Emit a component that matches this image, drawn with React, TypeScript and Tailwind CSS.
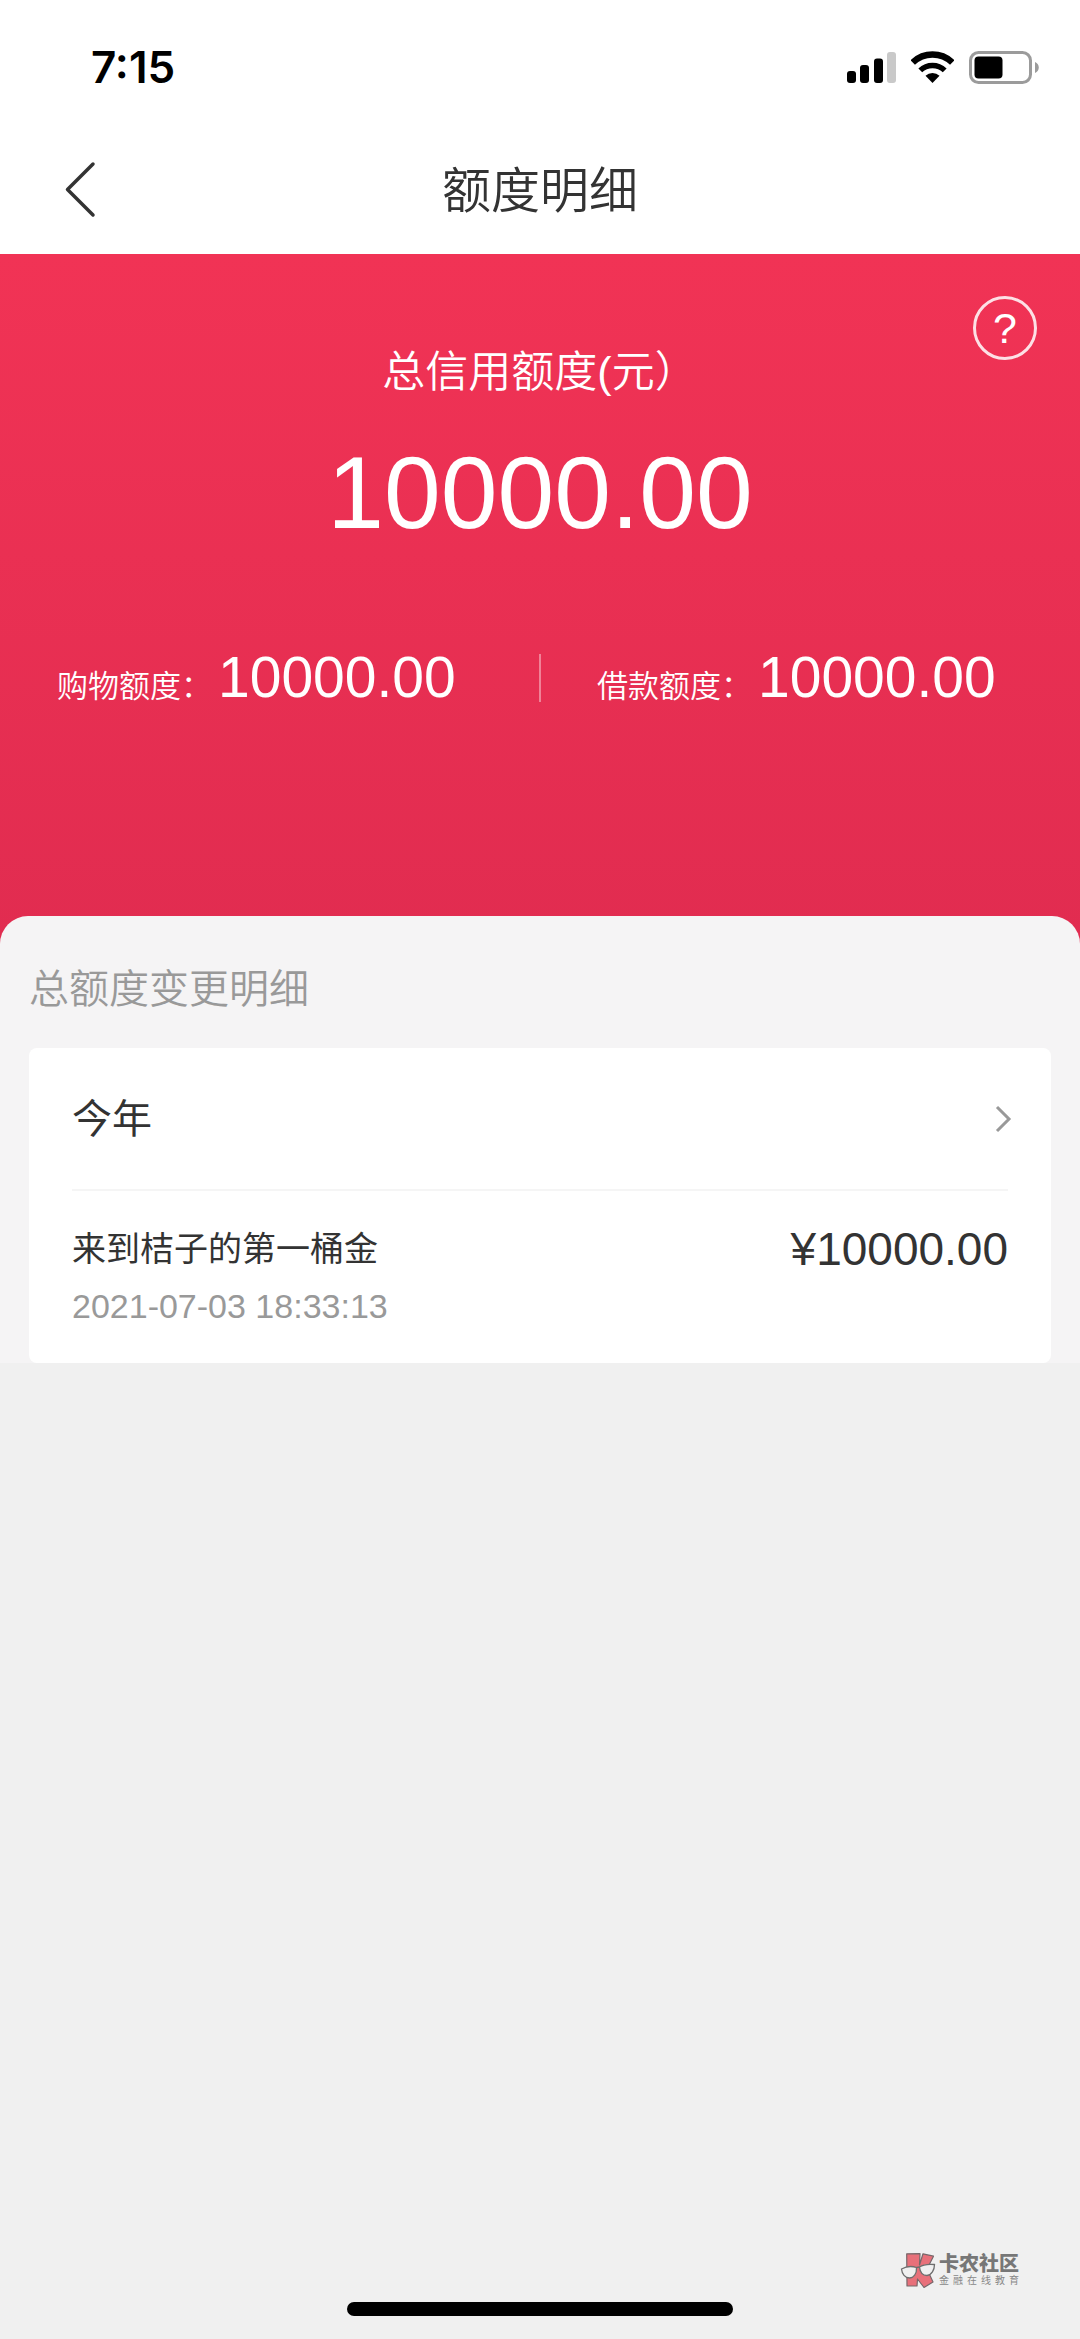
import React from "react";

const StatusIcons = () => (
  <div className="flex items-center gap-[15px]">
    <svg width="49" height="32" viewBox="0 0 49 32" aria-label="信号">
      <rect x="0" y="20" width="9" height="12" rx="3" fill="#000" />
      <rect x="13" y="14" width="9" height="18" rx="3" fill="#000" />
      <rect x="27" y="7.500" width="9" height="24.500" rx="3" fill="#000" />
      <rect x="40" y="1" width="9" height="31" rx="3" fill="#c9c9c9" />
    </svg>
    <svg width="43" height="32" viewBox="0 0 43 32" aria-label="无线网络">
      <g fill="none" stroke="#000">
        <path d="M1.700 11.500A28.500 28.500 0 0 1 41.300 11.500" strokeWidth="6.500" />
        <path d="M9.300 19.400A17.500 17.500 0 0 1 33.700 19.400" strokeWidth="5.500" />
      </g>
      <path d="M21.500 32 14.500 24.800A10 10 0 0 1 28.500 24.800Z" fill="#000" />
    </svg>
    <svg width="70" height="33" viewBox="0 0 70 33" aria-label="电池">
      <rect x="1.500" y="1.500" width="60" height="30" rx="8" fill="none" stroke="#9b9b9b" strokeWidth="3" />
      <rect x="5.500" y="5.500" width="28" height="22" rx="4" fill="#000" />
      <path d="M66 11c5 2 5 9 0 11Z" fill="#9b9b9b" />
    </svg>
  </div>
);

const Quota = ({ label, value }: { label: string; value: string }) => (
  <div className="flex flex-1 items-baseline gap-1.5 pl-[57px]">
    <dt className="text-[31px] font-[350]">{label}</dt>
    <dd className="text-[57px]">{value}</dd>
  </div>
);

const CommunityLogo = () => (
  <svg width="34" height="36" viewBox="0 0 34 36" className="overflow-visible">
    <path
      d="M5.700 0.800 19 0.600 18.500 12 22 0.800 32.500 3.200 26 16 32 29 23 34.500 16.500 26 16 33 6 33Z"
      fill="#e8707a"
      stroke="#77686b"
      strokeWidth="1.200"
      strokeLinejoin="round"
    />
    <g fill="#f0f0f0" stroke="#6e6e6e" strokeWidth="1.300">
      <path d="M0.500 16C5 13.500 11 13 15.500 14.500 16 21 12.500 25 8.500 25 4 25 1 21 0.500 16Z" />
      <path d="M18.500 14C22 11.500 28 11 33.500 11.500 33.500 17 30.500 22 26 22.500 21.500 22.500 19 19 18.500 14Z" />
      <path d="M15.500 14.500 18.500 14" />
    </g>
  </svg>
);

export default function App() {
  return (
    <div className="flex min-h-screen flex-col bg-[#f0f0f0] font-['Liberation_Sans','Noto_Sans_CJK_SC',sans-serif] text-[#333]">
      <header className="bg-white">
        <div className="flex h-32 items-center justify-between pt-1.5 pr-[41px] pl-[91px]">
          <time className="font-['Inter',sans-serif] text-[44px] font-semibold text-black">7:15</time>
          <StatusIcons />
        </div>
        <div className="grid h-[126px] grid-cols-[1fr_auto_1fr] items-center">
          <button type="button" aria-label="返回" className="w-fit pl-[65px]">
            <svg width="32" height="60" viewBox="0 0 32 60" fill="none" stroke="#333" strokeWidth="3.500" strokeLinecap="round" strokeLinejoin="round">
              <path d="M28 3 2.500 28.500 28 54" />
            </svg>
          </button>
          <h1 className="text-[49px] leading-[56px] font-[350]">额度明细</h1>
        </div>
      </header>

      <section className="relative bg-linear-to-b from-[#f13355] to-[#e12c50] pt-[86px] text-white">
        <button
          type="button"
          aria-label="帮助"
          className="absolute top-[42px] right-[43px] flex size-16 items-center justify-center rounded-full border-3 border-white/85 text-[43px] leading-none"
        >
          ?
        </button>
        <p className="text-center text-[43px] leading-[64px] font-[350]">总信用额度(元）</p>
        <p className="pt-[25px] text-center text-[102px] leading-[128px]">10000.00</p>
        <dl className="mt-[71px] flex h-[100px] items-center">
          <Quota label="购物额度：" value="10000.00" />
          <div className="-mx-px h-12 w-0.5 bg-white/40" />
          <Quota label="借款额度：" value="10000.00" />
        </dl>
        <div className="h-[217px]" />
      </section>

      <main className="relative -mt-[29px] rounded-t-[28px] bg-[#f5f4f5] px-[29px] pt-[43px]">
        <h2 className="text-[40px] leading-[60px] font-[350] text-[#999]">总额度变更明细</h2>
        <div className="mt-[29px] rounded-lg bg-white px-[43px]">
          <button type="button" className="flex h-[141px] w-full items-center justify-between text-[40px]">
            今年
            <svg width="18" height="28" viewBox="0 0 18 28" fill="none" stroke="#999" strokeWidth="3" className="-mr-1">
              <path d="M3 2 15 14 3 26" />
            </svg>
          </button>
          <hr className="border-t-2 border-[#f5f5f5]" />
          <div className="flex items-start justify-between pt-[30px] pb-7">
            <div>
              <p className="text-[34px] leading-[56px]">来到桔子的第一桶金</p>
              <time className="block text-[34px] leading-[58px] text-[#999]">2021-07-03 18:33:13</time>
            </div>
            <p className="text-[46px] leading-[56px]">¥10000.00</p>
          </div>
        </div>
      </main>

      <footer className="mt-auto">
        <div className="flex items-center justify-end gap-1 pr-[61px]">
          <CommunityLogo />
          <div className="text-[#777]">
            <p className="text-[20px] leading-[20px] font-black">卡农社区</p>
            <p className="text-[10px] leading-[14px] text-[#888] [text-align-last:justify]">金融在线教育</p>
          </div>
        </div>
        <div className="mx-auto mt-[13px] mb-[23px] h-[14px] w-[386px] rounded-full bg-black" />
      </footer>
    </div>
  );
}
